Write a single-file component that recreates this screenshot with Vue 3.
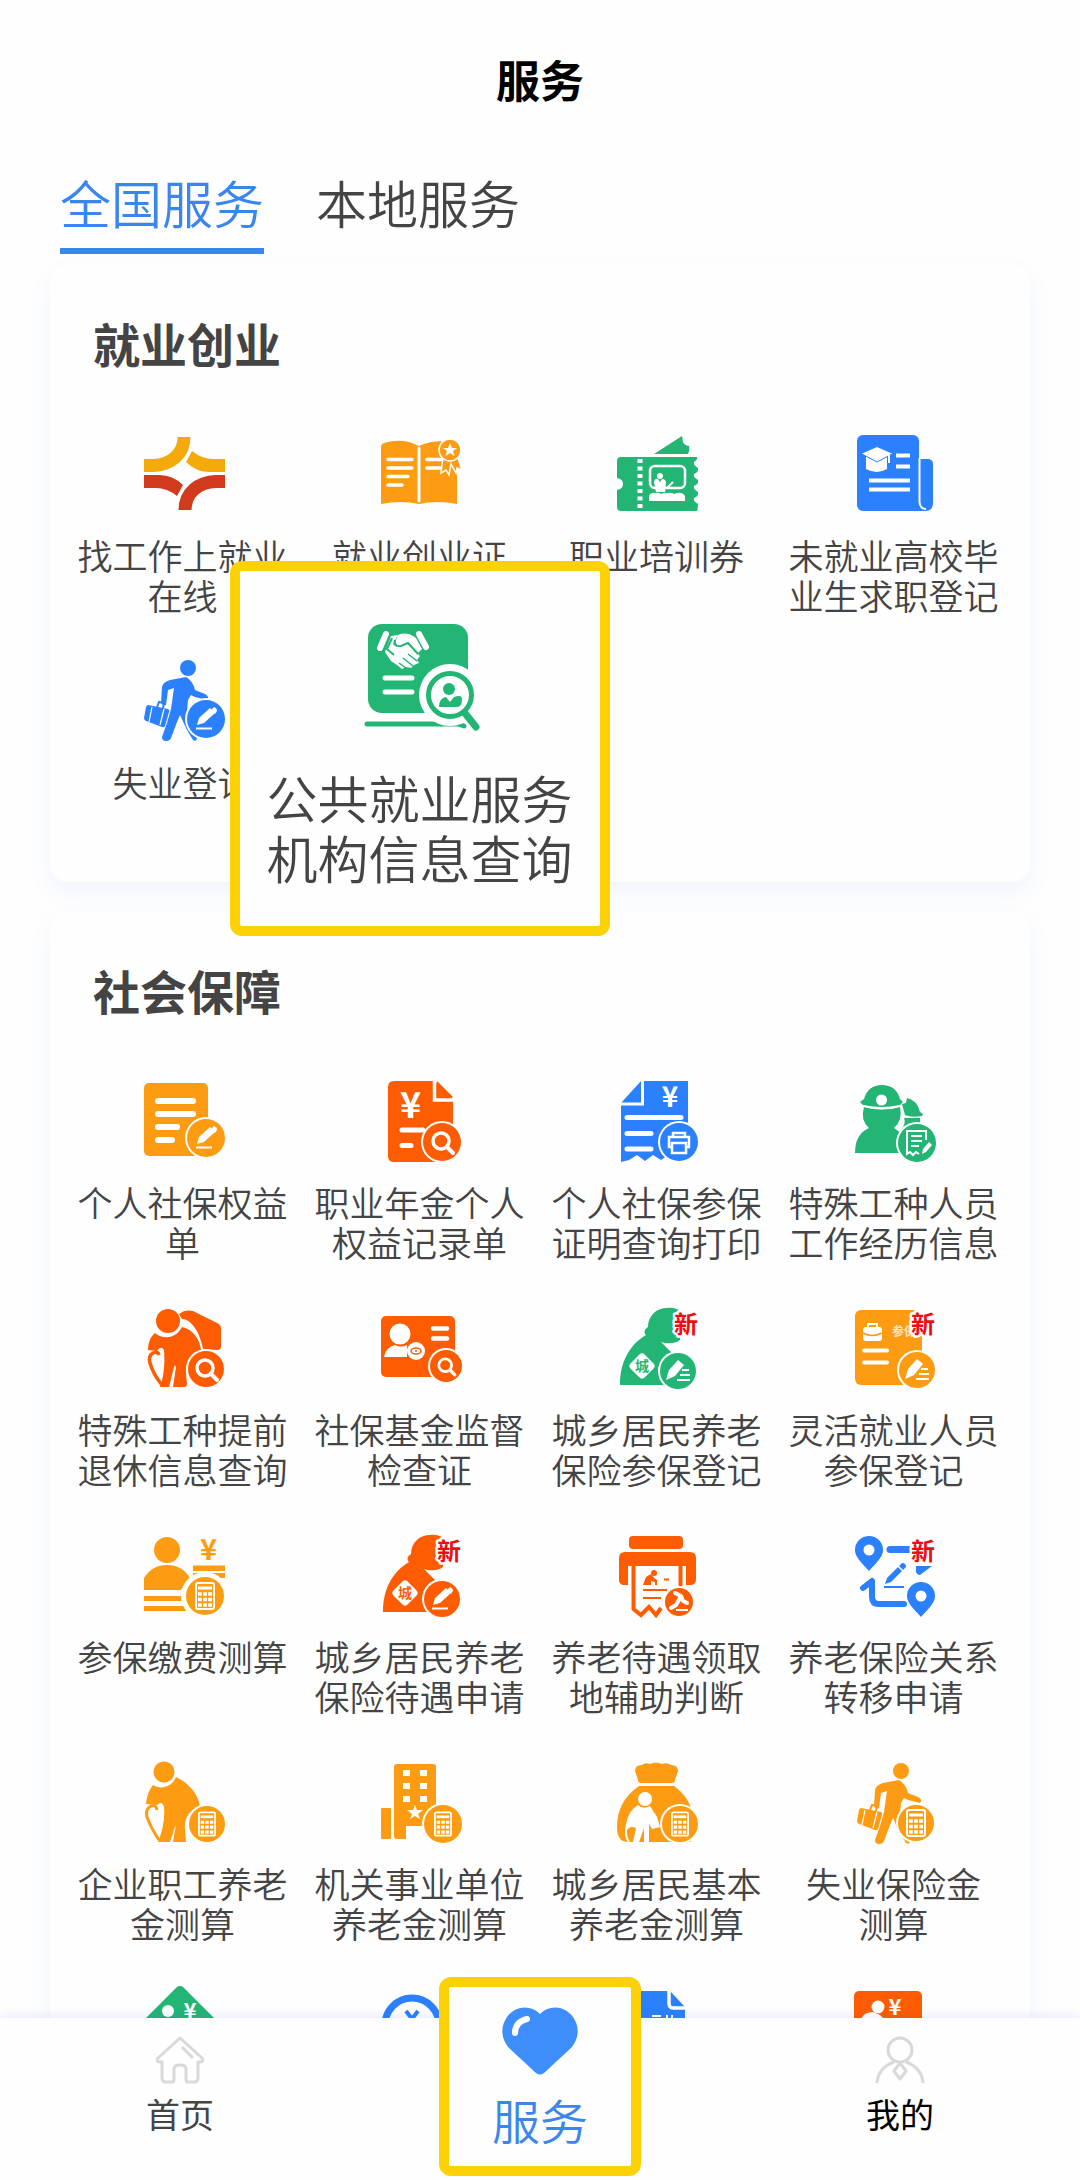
<script setup>
import { ref } from "vue";

const BLUE = "#2a80fd";
const AMBER = "#fd9c13";
const ORANGE = "#fe5c02";
const GREEN = "#22b574";

// small pieces shared by several icons
const yen = (x, y, size, color = "#fff") =>
  `<text x="${x}" y="${y}" font-size="${size}" font-weight="700" fill="${color}" text-anchor="middle" font-family="'Noto Sans CJK SC', sans-serif">¥</text>`;

const lines = (list, width = 5) =>
  `<path d="${list.map(([x1, x2, y]) => `M${x1} ${y}H${x2}`).join("")}" stroke="#fff" stroke-width="${width}" stroke-linecap="round" fill="none"/>`;

const badge = (x, y, r, color, inner) =>
  `<circle cx="${x}" cy="${y}" r="${r + 2}" fill="#fff"/><circle cx="${x}" cy="${y}" r="${r}" fill="${color}"/><g transform="translate(${x} ${y})">${inner}</g>`;

const pencil = `<path d="M-10 6L-8 -1L3 -11L8 -6L-3 4Z" fill="#fff" transform="translate(1 0)"/><path d="M5 -9L8 -12Q11 -11 11 -8L9 -5Z" fill="#fff"/><path d="M-10 9.500H6" stroke="#fff" stroke-width="2"/>`;
const writing = `<path d="M-12 9L-9 -1L0 -11L6 -6L-3 5Z" fill="#fff"/><path d="M4 -1H11M2 4H12M-1 9H12" stroke="#fff" stroke-width="2"/>`;
const search = `<circle cx="-1" cy="-1" r="8" fill="none" stroke="#fff" stroke-width="3.500"/><path d="M5 5L11 11" stroke="#fff" stroke-width="4" stroke-linecap="round"/>`;
const calc = `<rect x="-9" y="-13" width="18" height="26" rx="2" fill="none" stroke="#fff" stroke-width="2"/><path d="M-7 -8H7" stroke="#fff" stroke-width="3"/><path d="M-7 -2H7M-7 3.500H7M-7 9H7" stroke="#fff" stroke-width="3.500" stroke-dasharray="3.800 1.300"/>`;
const printer = `<path d="M-6 -5V-9H6V-5M-6 5H-10V-5H10V5H6M-7 1H7V11H-7Z" fill="none" stroke="#fff" stroke-width="2.500"/>`;
const notes = `<path d="M5 -12H-10V11L-7 9L-4 12L-1 9L2 11M9 -3V-12H3" fill="none" stroke="#fff" stroke-width="2"/><path d="M-6 -7H5M-6 -2H5M-6 3H2" stroke="#fff" stroke-width="2"/><path d="M5 11L6 6L12 -1L15 2L9 9Z" fill="#fff"/>`;
const gavel = `<path d="M-4 -9L2 -6L4 -1L8 1" stroke="#fff" stroke-width="4" stroke-linecap="round" stroke-linejoin="round" fill="none"/><path d="M1 -4L-3 3L-8 6" stroke="#fff" stroke-width="4" stroke-linecap="round" fill="none"/><path d="M-3 8H9" stroke="#fff" stroke-width="2"/>`;

const walker = (color) =>
  `<g fill="${color}"><circle cx="55" cy="17" r="8"/>
  <path d="M53 26L37 29Q30 31 29 36L28 52Q29 55 33 54L35 39L41 37L38 58L34 72L29 86Q29 90 33 90Q37 90 38 87L44 71L47 64L54 79L60 89Q63 91 64 88L59 74L54 60L55 49L58 44L62 46L74 49Q77 46 72 43L62 39Q60 30 53 26Z"/>
  <path d="M15 54L35 58Q37 59 36 61L32 75Q31 77 29 76L13 70Q11 69 11 67L13 56Q14 54 15 54Z"/></g>
  <path d="M24 56L26 51L31 52L30 57" fill="none" stroke="${color}" stroke-width="2"/>
  <path d="M19 56L16 71M31 58L27 74" stroke="#fff" stroke-width="1.200"/>`;

const elder = (color) =>
  `<g fill="${color}"><circle cx="31" cy="20" r="10.500"/>
  <path d="M20 33C28 38 39 35 43 25C56 31 66 43 67 55C56 58 51 66 52 77L53 90H40L43 72L37 90H25C30 78 32 66 31 55Q29 48 24 53L13 52C14 44 16 38 20 33Z"/></g>
  <path d="M24 58Q23 52 18 54Q12 57 14 65Q18 76 26 88" fill="none" stroke="${color}" stroke-width="3"/>`;

const resident = (color) =>
  `<path fill="${color}" d="M13 87C13 62 24 46 39 37C36 34 38 31 41 29C41 18 49 10 60 10C66 9 71 11 75 14L73 42C68 46 60 46 54 44L65 55L55 68L58 87Z"/>
  <rect x="25" y="58" width="20" height="20" rx="4" fill="#fff" transform="rotate(45 35 68)"/>
  <text x="35" y="73" font-size="14" font-weight="700" fill="${color}" text-anchor="middle" font-family="'Noto Sans CJK SC', sans-serif">城</text>`;

const isNew = `<text x="79" y="35" font-size="24" font-weight="700" fill="#f00d12" stroke="#fff" stroke-width="5" stroke-linejoin="round" paint-order="stroke" text-anchor="middle" font-family="'Noto Sans CJK SC', sans-serif">新</text>`;

const pin = (x, y) =>
  `<path fill="${BLUE}" fill-rule="evenodd" d="M${x} ${y - 14}a14 14 0 0 1 14 14c0 7-6 12-14 21c-8-9-14-14-14-21a14 14 0 0 1 14-14zm0 8.500a5.500 5.500 0 1 0 0 11a5.500 5.500 0 1 0 0-11z"/>`;

const icons = {
  online: `<path d="M11 41.500H20C38 41 51 30 51 13" fill="none" stroke="#f3aa0a" stroke-width="13"/>
    <path d="M59 27L53 38Q63 48 77 48H92V35H80Q69 35 59 27Z" fill="#f3aa0a"/>
    <g transform="rotate(180 51.500 49.500)"><path d="M11 41.500H20C38 41 51 30 51 13" fill="none" stroke="#d23a1d" stroke-width="13"/>
    <path d="M59 27L53 38Q63 48 77 48H92V35H80Q69 35 59 27Z" fill="#d23a1d"/></g>`,
  book: `<path fill="${AMBER}" d="M11 23Q11 20 14 19Q32 14 44 20L49 22L54 20Q66 15 84 19Q87 20 87 23V80Q67 76 49 80Q31 76 11 80Z"/>
    <path d="M49 24V77" stroke="#fff" stroke-width="3" stroke-linecap="round"/>
    ${lines([[18, 42, 35.5], [18, 42, 44], [18, 38, 52.5], [18, 32, 61], [57, 74, 35.5], [57, 74, 44]], 3.5)}
    <path d="M73 33L71 49L76 46L79 51L81 40L86 49L87 44L92 46L87 31Z" fill="${AMBER}" stroke="#fff" stroke-width="1.500"/>
    <circle cx="80" cy="26" r="11" fill="${AMBER}" stroke="#fff" stroke-width="1.500"/>
    <path d="M80 19L82 24H87L83 27L84.500 32L80 29L75.500 32L77 27L73 24H78Z" fill="#fff"/>`,
  ticket: `<path fill="${GREEN}" d="M47 30L75 12L76 18Q77 21 82 22Q83 25 81 30Z"/>
    <path fill="${GREEN}" d="M14 33H90Q91 36 87 38Q86 41 91 44Q92 48 87 50Q86 53 91 56Q92 60 87 62Q86 65 91 68Q92 72 87 74Q86 77 91 80Q91 84 90 87H14Q10 87 10 83V66Q16 65 16 60Q16 55 10 54V37Q10 33 14 33Z"/>
    <path d="M33 35V87" stroke="#fff" stroke-width="5" stroke-dasharray="4 3.500"/>
    <rect x="43" y="42" width="35" height="22" rx="5" fill="none" stroke="#fff" stroke-width="2.500"/>
    <circle cx="53" cy="52" r="3" fill="#fff"/><path d="M47 58Q48 54 51 55L53 58L55 55Q59 55 59 59L58 68H49Z" fill="#fff"/>
    <path d="M60 64L66 58" stroke="#fff" stroke-width="2"/>
    <path d="M42 77V72Q44 68 48 69Q52 68 54 70Q58 68 61 69Q64 68 67 70Q71 68 74 69Q78 70 78 73V77Z" fill="#fff"/>`,
  graduate: `<rect x="13" y="11" width="62" height="76" rx="6" fill="${BLUE}"/>
    <path d="M75 35H85Q89 36 89 40V79Q89 87 81 87H68Q75 86 75 78Z" fill="${BLUE}"/>
    <path d="M75.500 34V78Q76 85 82 85" fill="none" stroke="#fff" stroke-width="2"/>
    <path d="M22 32L33 37L43 32V45Q33 51 22 45Z" fill="#fff"/>
    <path d="M17 29.500L33 22.500L49 29.500L33 38Z" fill="#fff" stroke="${BLUE}" stroke-width="1"/>
    <path d="M45 31V39" stroke="#fff" stroke-width="2"/>
    <path d="M52 31.500H66M52 42.500H66M25 56.500H66M25 65.500H66" stroke="#fff" stroke-width="4"/>`,
  jobless: walker(BLUE) + badge(73, 68, 19, BLUE, pencil),
  rights: `<rect x="11" y="12" width="64" height="73" rx="5" fill="${AMBER}"/>
    ${lines([[25, 60, 30], [25, 60, 43], [25, 44, 56], [25, 39, 69]], 6)}${badge(73, 67, 19, AMBER, pencil)}`,
  annuity: `<path d="M24 10H66L83 26V85Q83 91 77 91H24Q18 91 18 85V16Q18 10 24 10Z" fill="${ORANGE}"/>
    <path d="M62 8L85 8V31L79 22Z" fill="#fff"/><path d="M67 10L83 26H67Z" fill="${ORANGE}"/>
    <path d="M64.500 9V29H84" fill="none" stroke="#fff" stroke-width="3.500"/>
    ${yen(40.5, 47, 36)}${lines([[32, 53, 59], [32, 41, 74.5]], 5)}${badge(72, 71, 19, ORANGE, search)}`,
  proof: `<path d="M34 10H81V85L72 89L63 83L54 89L46 84L38 90L30 84L22 89L14 91V32Z" fill="${BLUE}"/>
    <path d="M35.500 9V33H13" fill="none" stroke="#fff" stroke-width="3"/>
    ${yen(63, 36, 28)}${lines([[20, 74, 46.5], [20, 44, 62.5], [20, 44, 78]], 5)}${badge(72, 71, 19, BLUE, printer)}`,
  worker: `<g fill="${GREEN}"><path d="M63 27Q73 29 76 41L79 43L78 45Q68 47 61 44L58 33L62 32Z"/>
    <path d="M60 47H76Q77 53 72 58H58Q62 52 60 47Z"/>
    <path d="M20 36Q38 41 56 36Q59 49 50 57Q58 62 64 69L58 82H11Q11 63 25 57Q16 49 20 36Z"/>
    <path d="M16 31L20 28Q24 14 38 14Q52 14 56 28L59 31L56 34Q38 38 19 34Z"/></g>
    <path d="M19 35Q38 40 56 35" fill="none" stroke="#fff" stroke-width="1.500"/>
    <circle cx="37.500" cy="29" r="5.500" fill="#fff"/>${badge(73, 72, 19, GREEN, notes)}`,
  early: `<g fill="${ORANGE}"><circle cx="35" cy="23" r="12"/>
    <path d="M46 16C51 12 56 12 60 13L84 25C87 26 88 28 88 31V48C88 51 86 52 84 52L70 51C67 34 58 21 49 21Z"/>
    <path d="M22 35C28 41 42 42 49 29C60 31 67 42 68 52C58 56 52 64 53 76L54 86Q54 89 51 89H40L43 69Q42 66 41 69L36 89H27C31 78 32 66 31 52Q28 47 24 53L15 52C15 46 17 39 22 35Z"/></g>
    <path d="M26 57Q25 53 20 55Q15 58 17 65Q20 76 29 87" fill="none" stroke="${ORANGE}" stroke-width="3.500"/>
    ${badge(73, 71, 18, ORANGE, search)}`,
  inspect: `<rect x="11" y="18" width="74" height="61" rx="5" fill="${ORANGE}"/>
    <circle cx="30" cy="36" r="10.500" fill="#fff"/><path d="M14 59Q16 49 25 47Q31 50 37 47V59Z" fill="#fff"/>
    <circle cx="46" cy="53" r="9" fill="#fff"/><ellipse cx="46" cy="53" rx="5" ry="3" fill="none" stroke="${ORANGE}" stroke-width="1.500"/><circle cx="46" cy="53" r="1" fill="${ORANGE}"/>
    ${lines([[63, 77, 30.5], [63, 77, 40.5]], 4.5)}${badge(76, 68, 16, ORANGE, `<g transform="scale(0.8)">${search}</g>`)}`,
  enroll: resident(GREEN) + badge(71, 73, 18, GREEN, writing) + isNew,
  flexible: `<rect x="11" y="12" width="67" height="75" rx="6" fill="${AMBER}"/>
    <rect x="19" y="29" width="19" height="14" rx="3" fill="#fff"/><path d="M24 29V26H33V29" fill="none" stroke="#fff" stroke-width="2"/><path d="M19 35Q28 40 38 35" fill="none" stroke="${AMBER}" stroke-width="1.500"/>
    <text x="48" y="38" font-size="12" font-weight="700" fill="#fff" fill-opacity="0.75" font-family="'Noto Sans CJK SC', sans-serif">参保</text>
    ${lines([[20, 43, 52.5], [20, 43, 64.5]], 4)}${badge(73, 72, 18, AMBER, writing)}${isNew}`,
  payment: `<g fill="${AMBER}"><circle cx="34" cy="25" r="13"/><path d="M11 65V53Q19 40 34 40Q49 40 57 53L48 65Z"/>
    <rect x="11" y="71" width="38" height="5"/><rect x="11" y="81" width="45" height="5"/>
    <rect x="60" y="41" width="32" height="5"/><rect x="60" y="48" width="32" height="5"/></g>
    ${yen(75.5, 35, 29, AMBER)}<circle cx="72" cy="71" r="24" fill="#fff"/><path d="M60 40.500H92V45.500H60Z" fill="${AMBER}"/>${badge(72, 71, 19, AMBER, calc)}`,
  benefit: resident(ORANGE) + badge(72, 74, 18, ORANGE, pencil) + isNew,
  judge: `<rect x="22" y="11" width="54" height="13" rx="4" fill="${ORANGE}"/>
    <path d="M18 27H83Q89 27 89 33V54Q89 60 83 60H12V33Q12 27 18 27Z" fill="${ORANGE}"/>
    <path d="M12 54Q12 60 18 60H21V41H79V62H12Z" fill="#fff"/><path d="M12 50H21V60H18Q12 60 12 54Z" fill="${ORANGE}"/>
    <path d="M26.500 41V84L34 90L42 82L49 90L54 83M73.500 41V62" fill="none" stroke="${ORANGE}" stroke-width="4"/>
    <g fill="${ORANGE}"><circle cx="47" cy="48" r="3"/><path d="M36 60L39 52L44 49L47 53L50 55V60H48V57L44 56V60Z"/></g>
    <path d="M57 54.500H62M36 65H60M36 73H54" stroke="${ORANGE}" stroke-width="2"/>${badge(72, 77, 14, ORANGE, gavel)}`,
  transfer: `${pin(25, 25)}<path d="M46 24.500H66" stroke="${BLUE}" stroke-width="7" stroke-linecap="round"/>
    <path d="M72 41L88 41L76 50Q73 50 72 47Z" fill="${BLUE}"/>
    <path d="M19 63L28 56V72Q28 79 35 79H60" fill="none" stroke="${BLUE}" stroke-width="6" stroke-linecap="round" stroke-linejoin="round"/>
    <path d="M41 59L43 53L58 38Q62 38 62 42L47 57Z" fill="${BLUE}"/><path d="M54 41L59 46" stroke="#fff" stroke-width="1.500"/>
    <path d="M40 62H60" stroke="${BLUE}" stroke-width="2"/>${pin(77, 71)}${isNew}`,
  pension: elder(AMBER) + badge(74, 72, 18, AMBER, `<g transform="scale(0.9)">${calc}</g>`),
  office: `<g fill="${AMBER}"><rect x="24" y="12" width="42" height="75" rx="3"/><rect x="11" y="56" width="10" height="31" rx="1"/></g>
    <path d="M33 18h7v6h-7zM50 18h7v6h-7zM33 31h7v6h-7zM50 31h7v6h-7zM33 44h7v6h-7zM50 44h7v6h-7z" fill="#fff"/>
    <path d="M45 53L47 58H53L48 62L50 67L45 64L40 67L42 62L37 58H43Z" fill="#fff"/><path d="M36 74H66V88H36Z" fill="#fff"/>
    ${badge(73, 72, 19, AMBER, `<g transform="scale(0.9)">${calc}</g>`)}`,
  bag: `<g fill="${AMBER}"><path d="M31 28L28 19Q28 13 35 13Q38 10 43 12Q49 9 55 12Q60 10 64 13Q71 13 71 19L68 28Q68 31 65 31H34Q31 31 31 28Z"/>
    <path d="M32 34H67Q85 47 86 67L84 90H21Q10 90 10 75Q10 49 32 34Z"/></g>
    <circle cx="38" cy="47" r="7" fill="#fff"/>
    <path d="M31 53Q36 58 43 54L50 65L53 75L45 77L42 72V90H37V76L32 90H26L29 76Q22 73 19 80Q18 61 31 53Z" fill="#fff"/>
    <path d="M22 90Q17 84 20 72Q24 68 25 74" fill="none" stroke="#fff" stroke-width="2"/>
    ${badge(73, 72, 18, AMBER, `<g transform="scale(0.9)">${calc}</g>`)}`,
  joblessPay: `<g transform="translate(2 2)">${walker(AMBER)}</g>` + badge(72, 71, 18, AMBER, calc),
  diamond: `<rect x="18" y="17" width="58" height="58" rx="5" fill="${GREEN}" transform="rotate(45 47 46)"/>
    <circle cx="35" cy="32" r="6" fill="#fff"/>${yen(57, 40, 22)}`,
  coin: `<circle cx="42" cy="46" r="27" fill="none" stroke="${BLUE}" stroke-width="7"/><path d="M36 32L42 40L48 32M42 40V60M34 43H50" stroke="${BLUE}" stroke-width="4" fill="none"/>`,
  paper: `<path d="M14 12H63L78 28V90H14Z" fill="${BLUE}"/><path d="M62 10V24Q62 29 66 29H80" fill="none" stroke="#fff" stroke-width="3.500"/>
    <path d="M30 36V44M45 37H54M45 41H54M60 36V44M65 36V44" stroke="#fff" stroke-width="2"/>`,
  transferCard: `<rect x="10" y="12" width="68" height="70" rx="5" fill="${ORANGE}"/>
    <circle cx="34" cy="28" r="6.500" fill="#fff"/><path d="M16 45Q17 33 29 33L36 36L45 45Z" fill="#fff"/>${yen(51, 36, 22)}`,
};

const sections = [
  {
    title: "就业创业",
    items: [
      { icon: "online", label: "找工作上就业在线" },
      { icon: "book", label: "就业创业证" },
      { icon: "ticket", label: "职业培训券" },
      { icon: "graduate", label: "未就业高校毕业生求职登记" },
      { icon: "jobless", label: "失业登记" },
      { highlighted: true, label: "公共就业服务机构信息查询" },
    ],
  },
  {
    title: "社会保障",
    items: [
      { icon: "rights", label: "个人社保权益单" },
      { icon: "annuity", label: "职业年金个人权益记录单" },
      { icon: "proof", label: "个人社保参保证明查询打印" },
      { icon: "worker", label: "特殊工种人员工作经历信息" },
      { icon: "early", label: "特殊工种提前退休信息查询" },
      { icon: "inspect", label: "社保基金监督检查证" },
      { icon: "enroll", label: "城乡居民养老保险参保登记" },
      { icon: "flexible", label: "灵活就业人员参保登记" },
      { icon: "payment", label: "参保缴费测算" },
      { icon: "benefit", label: "城乡居民养老保险待遇申请" },
      { icon: "judge", label: "养老待遇领取地辅助判断" },
      { icon: "transfer", label: "养老保险关系转移申请" },
      { icon: "pension", label: "企业职工养老金测算" },
      { icon: "office", label: "机关事业单位养老金测算" },
      { icon: "bag", label: "城乡居民基本养老金测算" },
      { icon: "joblessPay", label: "失业保险金\n测算" },
      { icon: "diamond" },
      { icon: "coin" },
      { icon: "paper" },
      { icon: "transferCard" },
    ],
  },
];

const tabs = ["全国服务", "本地服务"];
const activeTab = ref(0);
</script>

<template>
  <div class="page">
    <main class="content">
      <h1>服务</h1>
      <div class="tabs" role="tablist">
        <button
          v-for="(tab, index) in tabs"
          :key="tab"
          type="button"
          role="tab"
          :aria-selected="activeTab === index"
          :class="['tab', { active: activeTab === index }]"
          @click="activeTab = index"
        >
          {{ tab }}
        </button>
      </div>

      <section v-for="section in sections" :key="section.title" class="card">
        <h2>{{ section.title }}</h2>
        <ul class="grid">
          <li v-for="(item, index) in section.items" :key="index">
            <a v-if="item.highlighted" href="#" class="spotlight">
              <svg class="spotlight-icon" viewBox="0 0 120 120" aria-hidden="true">
                <rect x="8" y="6" width="100" height="89" rx="14" fill="#22b574" />
                <path
                  d="M7 106H98L104 108"
                  stroke="#22b574"
                  stroke-width="5"
                  stroke-linecap="round"
                  fill="none"
                />
                <path
                  d="M25 60H52M25 74H52"
                  stroke="#fff"
                  stroke-width="5"
                  stroke-linecap="round"
                />
                <path
                  d="M26 16L20 30M59 16L66 29"
                  stroke="#fff"
                  stroke-width="6"
                  stroke-linecap="round"
                />
                <path
                  d="M31 18L38 17L33 26Q36 30 42 26L47 25L60 38L57 42L59 45L54 47L51 50L46 49L42 51L37 47L31 43L25 34Z"
                  fill="#fff"
                />
                <path
                  d="M38 17Q47 13 56 20L62 31L58 35L48 24L40 28Q34 27 36 22Z"
                  fill="#fff"
                />
                <path
                  d="M32 20L27 31L34 37M35 22Q33 29 41 28L48 25L58 36"
                  stroke="#22b574"
                  stroke-width="2"
                  fill="none"
                />
                <path
                  d="M48 36L57 43M43 40L53 48M39 45L46 50"
                  stroke="#22b574"
                  stroke-width="1.5"
                />
                <circle cx="90" cy="77" r="31" fill="#fff" />
                <path d="M104 94L119 112" stroke="#fff" stroke-width="13" />
                <path
                  d="M104 94L116 109"
                  stroke="#22b574"
                  stroke-width="7"
                  stroke-linecap="round"
                />
                <circle
                  cx="90"
                  cy="77"
                  r="21.5"
                  fill="#fff"
                  stroke="#22b574"
                  stroke-width="5"
                />
                <circle cx="89" cy="71" r="6" fill="#22b574" />
                <path
                  d="M79 89Q79 80 86 79L90 84L94 79Q102 76 102 81Q102 89 97 89Z"
                  fill="#22b574"
                />
              </svg>
              <span class="label">{{ item.label }}</span>
            </a>
            <a v-else href="#" class="service">
              <svg
                class="icon"
                viewBox="0 0 100 100"
                aria-hidden="true"
                v-html="icons[item.icon]"
              ></svg>
              <span v-if="item.label" class="label">{{ item.label }}</span>
            </a>
          </li>
        </ul>
      </section>
    </main>

    <nav class="tabbar">
      <a href="#" class="nav-item">
        <svg class="nav-icon" viewBox="0 0 50 50" aria-hidden="true">
          <path
            d="M25 3L3 23Q1 27 5 27H7V43Q7 47 11 47H17Q19 47 19 44V34Q19 30 25 30Q31 30 31 34V44Q31 47 33 47H39Q43 47 43 43V27H45Q49 27 47 23ZM27 12L38 23"
          />
        </svg>
        <span>首页</span>
      </a>
      <a href="#" class="nav-item current" aria-current="page">
        <svg class="heart" viewBox="0 0 76 68" aria-hidden="true">
          <path
            d="M38 7C48 -3 63 -1 71 10C78 20 77 32 69 41L42 66Q38 69 34 66L7 41C-1 32 -2 20 5 10C13 -1 28 -3 38 7Z"
            fill="#3d8dfa"
          />
          <path
            d="M13 26Q13 15 25 12"
            stroke="#fff"
            stroke-width="6"
            stroke-linecap="round"
            fill="none"
          />
        </svg>
        <span>服务</span>
      </a>
      <a href="#" class="nav-item mine">
        <svg class="nav-icon" viewBox="0 0 50 50" aria-hidden="true">
          <circle cx="25" cy="15" r="12" />
          <path d="M19 27Q3 33 2 48M31 27Q47 33 48 48M25 28L19 36L25 44L31 36Z" />
        </svg>
        <span>我的</span>
      </a>
    </nav>
  </div>
</template>

<style>
body {
  margin: 0;
}
</style>

<style scoped>
.page {
  display: flex;
  flex-direction: column;
  height: 100vh;
  background-color: #fefefe;
  color: #444;
  font-family: "Noto Sans CJK SC", sans-serif;
}
.content {
  flex: 1;
  min-height: 0;
  overflow-y: auto;
  scrollbar-width: none;
  padding: 48px 50px 0;
}
h1 {
  margin: 0;
  font-size: 44px;
  line-height: 62px;
  text-align: center;
  color: #000;
}
.tabs {
  display: flex;
  gap: 52px;
  margin: 62px 0 11px;
  padding: 0 10px;
}
.tab {
  padding: 0 0 16px;
  border: 0;
  border-bottom: 6px solid transparent;
  background: none;
  color: #444;
  font-family: inherit;
  font-size: 51px;
  font-weight: 350;
  line-height: 60px;
  cursor: pointer;
}
.tab.active {
  border-color: #3b86ee;
  color: #3b86ee;
}
.card {
  margin-bottom: 30px;
  padding: 48px 18px 38px 14px;
  border-radius: 18px;
  background-color: #fefefe;
  box-shadow: 0 10px 24px rgba(60, 110, 240, 0.07);
}
h2 {
  margin: 0 0 51px;
  padding-left: 29px;
  font-size: 47px;
  line-height: 60px;
}
.grid {
  display: grid;
  grid-template-columns: repeat(4, 1fr);
  row-gap: 34px;
  margin: 0;
  padding: 0;
  list-style: none;
}
.grid li {
  position: relative;
  min-height: 193px;
}
.service,
.spotlight {
  display: flex;
  flex-direction: column;
  align-items: center;
  color: inherit;
  font-size: 35px;
  font-weight: 350;
  line-height: 40px;
  text-decoration: none;
}
/* six characters to a line */
.label {
  max-width: 6em;
  text-align: center;
  white-space: pre-line;
}
.icon {
  width: 100px;
  height: 100px;
  margin-bottom: 11px;
}
/* enlarged entry floating over its neighbours */
.spotlight {
  position: absolute;
  top: -90px;
  left: 50%;
  z-index: 1;
  box-sizing: border-box;
  width: 380px;
  padding: 47px 0 39px;
  border: 10px solid #fdd204;
  border-radius: 12px;
  background-color: #fefefe;
  font-size: 51px;
  line-height: 60px;
  transform: translateX(-50%);
}
.spotlight-icon {
  width: 120px;
  height: 120px;
  margin-bottom: 29px;
  overflow: visible;
}
.tabbar {
  position: relative;
  display: grid;
  grid-template-columns: repeat(3, 1fr);
  background-color: #fefefe;
  box-shadow: 0 -3px 8px rgba(70, 90, 220, 0.1);
}
.nav-item {
  display: flex;
  flex-direction: column;
  align-items: center;
  padding-top: 17px;
  color: #444;
  font-size: 34px;
  line-height: 40px;
  text-decoration: none;
}
.nav-item.mine {
  color: #000;
}
.nav-icon {
  width: 50px;
  height: 50px;
  margin-bottom: 9px;
  fill: none;
  stroke: #d9d9d9;
  stroke-width: 3px;
  stroke-linejoin: round;
}
.nav-item.current {
  justify-self: center;
  box-sizing: border-box;
  width: 202px;
  margin: -41px 0 4px;
  padding: 20px 0 17px;
  border: 10px solid #fdd204;
  border-radius: 12px;
  background-color: #fefefe;
  color: #3b86ee;
  font-size: 48px;
  font-weight: 350;
  line-height: 60px;
}
.heart {
  width: 76px;
  height: 68px;
  margin-bottom: 14px;
}
</style>
